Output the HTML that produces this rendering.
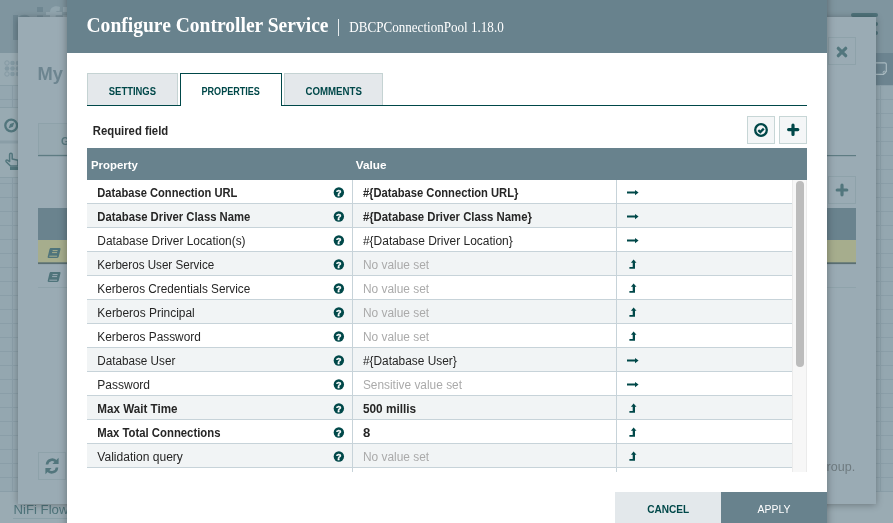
<!DOCTYPE html>
<html><head><meta charset="utf-8">
<style>
*{box-sizing:border-box;margin:0;padding:0}
html,body{width:893px;height:523px;overflow:hidden;position:relative;background:#94a7b0;font-family:"Liberation Sans",sans-serif}
.abs{position:absolute}
#nhead{left:0;top:0;width:893px;height:53px;background:#7f959f}
#ltool{left:0;top:53px;width:18px;height:32px;background:#98aab2}
#rtool{left:876px;top:53px;width:17px;height:32px;background:#6c8490}
#crumb{left:0;top:492px;width:893px;height:31px;background:#9aabb3}
#grid{left:0;top:85px;width:893px;height:407px;background-color:#94a7b0;
 background-image:linear-gradient(#8a9ea8 1px,transparent 1px),linear-gradient(90deg,#8a9ea8 1px,transparent 1px);
 background-size:14px 14px;background-position:12px 14px}
#mid{left:18px;top:17px;width:858px;height:487px;background:#9aabb4;box-shadow:0 1px 7px rgba(0,0,0,.3)}
#dlg{left:67px;top:-10px;width:760px;height:560px;background:#fff;box-shadow:0 0 8px rgba(0,0,0,.35)}
#dhead{left:67px;top:0;width:760px;height:53px;background:#68828d}
.tab{top:73px;height:32px;background:#e4e8eb;border:1px solid #c5d3d3;border-bottom:none}
#tabline{left:87px;top:105px;width:720px;height:1px;background:#004849}
#t2{background:#fff;border:1px solid #004849;border-bottom:none;height:33px}
.btn{top:116px;width:28px;height:28px;background:#f4f6f7;border:1px solid #c7d6d6}
#thead{left:87px;top:148px;width:720px;height:32px;background:#68828d}
#sb{left:792px;top:180px;width:15px;height:292px;background:#f7f7f7;border-left:1px solid #ebebeb;border-right:1px solid #ebebeb}
#thumb{left:796px;top:181px;width:8px;height:186px;background:#bcbcbc;border-radius:4px}
#cancel{left:615px;top:492px;width:106px;height:40px;background:#e3e8eb}
#apply{left:721px;top:492px;width:106px;height:40px;background:#68828d}
svg{position:absolute;left:0;top:0;will-change:transform}
</style></head><body>
<div class="abs" id="nhead"></div>
<svg width="893" height="60" style="position:absolute;left:0;top:0">
<path d="M13 40V15h5v2.5c2-2 4-2.7 6.5-2.7c3 0 5.5 1.5 6.5 4V40z" fill="#6f8792"/>
<rect x="37" y="7" width="6" height="5" fill="#6f8792"/>
<rect x="37" y="15.3" width="6" height="25" fill="#6f8792"/>
<path d="M50 40V12.5c0-4 2.5-6.2 6.5-6.2c1.5 0 2.6 .2 3.6 .6l-.6 4.4c-.6-.2-1.3-.3-2-.3c-1.4 0-1.8 .7-1.8 2V40z" fill="#91a5ae"/>
<rect x="46" y="12" width="16" height="3" fill="#91a5ae"/>
<rect x="63" y="7" width="5" height="5" fill="#91a5ae"/>
<rect x="63" y="15.3" width="5" height="25" fill="#91a5ae"/>
</svg>
<div class="abs" style="left:851px;top:13px;width:27px;height:4px;border-radius:2px;background:#4f727a"></div>
<div class="abs" style="left:873px;top:22px;width:5px;height:4px;border-radius:2px;background:#4f727a"></div>
<div class="abs" style="left:873px;top:31px;width:5px;height:4px;border-radius:2px;background:#4f727a"></div>
<div class="abs" id="ltool"></div>
<div class="abs" id="rtool"></div>
<div class="abs" id="grid"></div>
<div class="abs" id="crumb"></div>
<svg width="893" height="523" style="position:absolute;left:0;top:0">
<g fill="#8399a3"><circle cx="7" cy="63" r="2.2" fill="none" stroke="#8399a3" stroke-width="0.9"/><circle cx="12.5" cy="63" r="2.3"/><circle cx="18" cy="63" r="2.3"/>
<circle cx="7" cy="68.5" r="2.3"/><circle cx="12.5" cy="68.5" r="2.3"/><circle cx="18" cy="68.5" r="2.3"/>
<circle cx="7" cy="74" r="2.2" fill="none" stroke="#8399a3" stroke-width="0.9"/><circle cx="12.5" cy="74" r="2.3"/><circle cx="18" cy="74" r="2.3"/></g>
<rect x="0" y="85" width="18" height="1" fill="#889da6"/>
<rect x="0" y="107" width="18" height="70" fill="#98aab2"/>
<rect x="0" y="107" width="18" height="1" fill="#889da6"/>
<circle cx="11.2" cy="125.5" r="5.9" fill="none" stroke="#52767d" stroke-width="2.3"/>
<path d="M8.6 128.3l1.5-4.2l4.2-1.5l-1.5 4.2z" fill="#52767d"/>
<rect x="0" y="140.5" width="18" height="3" fill="#8a9ea7"/>
<path d="M9.6 161.5v-7c0-1.8 2.6-1.8 2.6 0v4.5l5.8 1.2v5.8h-7.5l-4.3-4.3c-.8-.9 .3-2.2 1.3-1.5z" fill="none" stroke="#52767d" stroke-width="1.5" stroke-linejoin="round"/>
<rect x="10" y="167" width="8" height="3" fill="#52767d"/>
<rect x="0" y="177" width="18" height="1" fill="#889da6"/>
<path d="M870 62.8h14.8q1.5 0 1.5 1.5v7.3l-2.8 2.8h-13.5" fill="none" stroke="#a9bac1" stroke-width="1.2"/><circle cx="884.3" cy="72.4" r="1.2" fill="none" stroke="#a9bac1" stroke-width="1"/>
<text x="13.5" y="513.7" font-size="13.2" fill="#4f747b" font-family="Liberation Sans">NiFi Flow</text>
<rect x="13" y="518" width="60" height="1" fill="#8aa0a8"/>
</svg>
<div class="abs" id="mid"></div>
<svg width="893" height="523" style="position:absolute;left:0;top:0">
<text x="37.6" y="79.8" font-size="17.6" font-weight="bold" fill="#6d8590" font-family="Liberation Sans" textLength="25.4" lengthAdjust="spacingAndGlyphs">My</text>
<rect x="38.5" y="123.5" width="40" height="31" fill="#97a9b1" stroke="#8ea2aa" stroke-width="1"/>
<text x="61" y="145" font-size="10.5" font-weight="bold" fill="#5a7b82" font-family="Liberation Sans">G</text>
<rect x="38" y="155" width="818" height="1.2" fill="#5e7c83"/>
<rect x="828.5" y="37.5" width="27" height="27" fill="none" stroke="#8ea2aa" stroke-width="1"/>
<path d="M838.3 48.3l7.4 7.4M845.7 48.3l-7.4 7.4" stroke="#52767d" stroke-width="3.2" stroke-linecap="round"/>
<rect x="828.5" y="176.5" width="27" height="27" fill="none" stroke="#8ea2aa" stroke-width="1"/>
<path d="M842 185.2v9.6M837.2 190h9.6" stroke="#52767d" stroke-width="3.2" stroke-linecap="round"/>
<rect x="38" y="208" width="818" height="32" fill="#6a838e"/>
<rect x="38" y="240" width="818" height="23" fill="#a6ad8d"/>
<rect x="38" y="262.3" width="818" height="1.8" fill="#5a6f73"/>
<rect x="38" y="287" width="818" height="1" fill="#8fa3ab"/>
<path d="M51 248h8.6c.7 0 1.1 .5 .9 1.2l-1.8 7.6c-.2 .7-.8 1.2-1.5 1.2h-8.6c-.7 0-1.1-.5-.9-1.2l1.8-7.6c.2-.7 .8-1.2 1.5-1.2z" fill="#4f747b"/><path d="M52.6 250.6h5M52.1 252.6h5M49.3 256.2h7.8" stroke="#a6ad8d" stroke-width="1"/>
<path d="M51 272h8.6c.7 0 1.1 .5 .9 1.2l-1.8 7.6c-.2 .7-.8 1.2-1.5 1.2h-8.6c-.7 0-1.1-.5-.9-1.2l1.8-7.6c.2-.7 .8-1.2 1.5-1.2z" fill="#4f747b"/><path d="M52.6 274.6h5M52.1 276.6h5M49.3 280.2h7.8" stroke="#9aabb4" stroke-width="1"/>
<rect x="38.5" y="452.5" width="27" height="27" fill="none" stroke="#8ea2aa" stroke-width="1"/>
<path d="M47 464.5a5.2 5.2 0 0 1 9.3-2.8M57 467.5a5.2 5.2 0 0 1-9.3 2.8" fill="none" stroke="#52767d" stroke-width="2.6"/>
<path d="M58.6 457.8v6.2h-6.2z M45.4 474.2v-6.2h6.2z" fill="#52767d"/>
<text x="826.6" y="471" font-size="13" fill="#6f7b80" font-family="Liberation Sans" textLength="28.6" lengthAdjust="spacingAndGlyphs">roup.</text>
</svg>
<div class="abs" id="dlg"></div>
<div class="abs" id="dhead"></div>
<div class="abs" id="tabline"></div>
<div class="abs tab" style="left:87px;width:91px"></div>
<div class="abs tab" id="t2" style="left:180px;width:102px"></div>
<div class="abs tab" style="left:284px;width:99px"></div>
<div class="abs btn" style="left:747px"></div>
<div class="abs btn" style="left:779px"></div>
<div class="abs" id="thead"></div>
<div class="abs" id="sb"></div>
<div class="abs" id="thumb"></div>
<div class="abs" id="cancel"></div>
<div class="abs" id="apply"></div>
<svg width="893" height="523" viewBox="0 0 893 523">
<text x="86.50" y="31.50" font-size="20" font-weight="bold" fill="#fff" font-family="Liberation Serif" textLength="242.00" lengthAdjust="spacingAndGlyphs" >Configure Controller Service</text>
<rect x="338" y="19" width="1" height="17" fill="#e6ecee"/>
<text x="349.30" y="32.40" font-size="14.6" font-weight="normal" fill="#fff" font-family="Liberation Serif" textLength="154.40" lengthAdjust="spacingAndGlyphs" >DBCPConnectionPool 1.18.0</text>
<text x="108.80" y="94.90" font-size="10" font-weight="bold" fill="#004849" font-family="Liberation Sans" textLength="47.20" lengthAdjust="spacingAndGlyphs" >SETTINGS</text>
<text x="201.50" y="94.90" font-size="10" font-weight="bold" fill="#004849" font-family="Liberation Sans" textLength="58.40" lengthAdjust="spacingAndGlyphs" >PROPERTIES</text>
<text x="305.50" y="94.90" font-size="10" font-weight="bold" fill="#004849" font-family="Liberation Sans" textLength="56.40" lengthAdjust="spacingAndGlyphs" >COMMENTS</text>
<text x="92.80" y="135.20" font-size="12" font-weight="bold" fill="#262626" font-family="Liberation Sans" textLength="75.40" lengthAdjust="spacingAndGlyphs" >Required field</text>
<text x="91.00" y="168.70" font-size="11.6" font-weight="bold" fill="#fff" font-family="Liberation Sans" textLength="46.80" lengthAdjust="spacingAndGlyphs" >Property</text>
<text x="355.80" y="168.80" font-size="11.6" font-weight="bold" fill="#fff" font-family="Liberation Sans" textLength="30.70" lengthAdjust="spacingAndGlyphs" >Value</text>
<text x="647.20" y="512.70" font-size="11" font-weight="bold" fill="#004849" font-family="Liberation Sans" textLength="42.00" lengthAdjust="spacingAndGlyphs" >CANCEL</text>
<text x="757.50" y="512.70" font-size="11" font-weight="normal" fill="#fff" font-family="Liberation Sans" textLength="32.90" lengthAdjust="spacingAndGlyphs" >APPLY</text>
<!-- check icon -->
<circle cx="761" cy="130" r="5.8" fill="none" stroke="#004849" stroke-width="2.3"/>
<path d="M758.3 130.1l2 2l3.5-3.5" fill="none" stroke="#004849" stroke-width="2.3"/>
<!-- plus icon -->
<path d="M793 125.2v9.2M788.6 129.6h9.2" stroke="#004849" stroke-width="3.2" stroke-linecap="round"/>
<rect x="87" y="180" width="705" height="24" fill="#ffffff"/>
<rect x="87" y="203" width="705" height="1" fill="#c7d3d9"/>
<rect x="87" y="204" width="705" height="24" fill="#f1f4f5"/>
<rect x="87" y="227" width="705" height="1" fill="#c7d3d9"/>
<rect x="87" y="228" width="705" height="24" fill="#ffffff"/>
<rect x="87" y="251" width="705" height="1" fill="#c7d3d9"/>
<rect x="87" y="252" width="705" height="24" fill="#f1f4f5"/>
<rect x="87" y="275" width="705" height="1" fill="#c7d3d9"/>
<rect x="87" y="276" width="705" height="24" fill="#ffffff"/>
<rect x="87" y="299" width="705" height="1" fill="#c7d3d9"/>
<rect x="87" y="300" width="705" height="24" fill="#f1f4f5"/>
<rect x="87" y="323" width="705" height="1" fill="#c7d3d9"/>
<rect x="87" y="324" width="705" height="24" fill="#ffffff"/>
<rect x="87" y="347" width="705" height="1" fill="#c7d3d9"/>
<rect x="87" y="348" width="705" height="24" fill="#f1f4f5"/>
<rect x="87" y="371" width="705" height="1" fill="#c7d3d9"/>
<rect x="87" y="372" width="705" height="24" fill="#ffffff"/>
<rect x="87" y="395" width="705" height="1" fill="#c7d3d9"/>
<rect x="87" y="396" width="705" height="24" fill="#f1f4f5"/>
<rect x="87" y="419" width="705" height="1" fill="#c7d3d9"/>
<rect x="87" y="420" width="705" height="24" fill="#ffffff"/>
<rect x="87" y="443" width="705" height="1" fill="#c7d3d9"/>
<rect x="87" y="444" width="705" height="24" fill="#f1f4f5"/>
<rect x="87" y="467" width="705" height="1" fill="#c7d3d9"/>
<rect x="87" y="468" width="705" height="24" fill="#ffffff"/>
<rect x="87" y="491" width="705" height="1" fill="#c7d3d9"/>
<rect x="352" y="180" width="1" height="292" fill="#c7d3d9"/>
<rect x="616" y="180" width="1" height="292" fill="#c7d3d9"/>
<rect x="87" y="472" width="720" height="20" fill="#fff"/>
<text x="97.30" y="197.20" font-size="12" font-weight="bold" fill="#262626" font-family="Liberation Sans" textLength="140.00" lengthAdjust="spacingAndGlyphs" >Database Connection URL</text>
<text x="362.90" y="197.20" font-size="12" font-weight="bold" fill="#262626" font-family="Liberation Sans" textLength="155.50" lengthAdjust="spacingAndGlyphs" >#{Database Connection URL}</text>
<circle cx="338.85" cy="192.55" r="5.2" fill="#004849"/>
<text x="338.85" y="195.75" font-size="9" font-weight="bold" fill="#fff" stroke="#fff" stroke-width="0.35" font-family="Liberation Sans" text-anchor="middle">?</text>
<path d="M627 191.55h8v-1.6l3.6 2.6l-3.6 2.6v-1.6h-8z" fill="#004849"/>
<text x="97.30" y="221.20" font-size="12" font-weight="bold" fill="#262626" font-family="Liberation Sans" textLength="153.00" lengthAdjust="spacingAndGlyphs" >Database Driver Class Name</text>
<text x="362.90" y="221.20" font-size="12" font-weight="bold" fill="#262626" font-family="Liberation Sans" textLength="169.00" lengthAdjust="spacingAndGlyphs" >#{Database Driver Class Name}</text>
<circle cx="338.85" cy="216.55" r="5.2" fill="#004849"/>
<text x="338.85" y="219.75" font-size="9" font-weight="bold" fill="#fff" stroke="#fff" stroke-width="0.35" font-family="Liberation Sans" text-anchor="middle">?</text>
<path d="M627 215.55h8v-1.6l3.6 2.6l-3.6 2.6v-1.6h-8z" fill="#004849"/>
<text x="97.30" y="245.20" font-size="12" font-weight="normal" fill="#262626" font-family="Liberation Sans" textLength="148.30" lengthAdjust="spacingAndGlyphs" >Database Driver Location(s)</text>
<text x="362.90" y="245.20" font-size="12" font-weight="normal" fill="#262626" font-family="Liberation Sans" textLength="149.90" lengthAdjust="spacingAndGlyphs" >#{Database Driver Location}</text>
<circle cx="338.85" cy="240.55" r="5.2" fill="#004849"/>
<text x="338.85" y="243.75" font-size="9" font-weight="bold" fill="#fff" stroke="#fff" stroke-width="0.35" font-family="Liberation Sans" text-anchor="middle">?</text>
<path d="M627 239.55h8v-1.6l3.6 2.6l-3.6 2.6v-1.6h-8z" fill="#004849"/>
<text x="97.30" y="269.20" font-size="12" font-weight="normal" fill="#262626" font-family="Liberation Sans" textLength="116.90" lengthAdjust="spacingAndGlyphs" >Kerberos User Service</text>
<text x="362.90" y="269.20" font-size="12" font-weight="normal" fill="#aaaaaa" font-family="Liberation Sans" textLength="66.20" lengthAdjust="spacingAndGlyphs" >No value set</text>
<circle cx="338.85" cy="264.55" r="5.2" fill="#004849"/>
<text x="338.85" y="267.75" font-size="9" font-weight="bold" fill="#fff" stroke="#fff" stroke-width="0.35" font-family="Liberation Sans" text-anchor="middle">?</text>
<path d="M633.6 259.60l2.9 3.2h-1.5v6h-5.6v-1.9h3.3v-4.1h-1.8z" fill="#004849"/>
<text x="97.30" y="293.20" font-size="12" font-weight="normal" fill="#262626" font-family="Liberation Sans" textLength="153.00" lengthAdjust="spacingAndGlyphs" >Kerberos Credentials Service</text>
<text x="362.90" y="293.20" font-size="12" font-weight="normal" fill="#aaaaaa" font-family="Liberation Sans" textLength="66.20" lengthAdjust="spacingAndGlyphs" >No value set</text>
<circle cx="338.85" cy="288.55" r="5.2" fill="#004849"/>
<text x="338.85" y="291.75" font-size="9" font-weight="bold" fill="#fff" stroke="#fff" stroke-width="0.35" font-family="Liberation Sans" text-anchor="middle">?</text>
<path d="M633.6 283.60l2.9 3.2h-1.5v6h-5.6v-1.9h3.3v-4.1h-1.8z" fill="#004849"/>
<text x="97.30" y="317.20" font-size="12" font-weight="normal" fill="#262626" font-family="Liberation Sans" textLength="97.40" lengthAdjust="spacingAndGlyphs" >Kerberos Principal</text>
<text x="362.90" y="317.20" font-size="12" font-weight="normal" fill="#aaaaaa" font-family="Liberation Sans" textLength="66.20" lengthAdjust="spacingAndGlyphs" >No value set</text>
<circle cx="338.85" cy="312.55" r="5.2" fill="#004849"/>
<text x="338.85" y="315.75" font-size="9" font-weight="bold" fill="#fff" stroke="#fff" stroke-width="0.35" font-family="Liberation Sans" text-anchor="middle">?</text>
<path d="M633.6 307.60l2.9 3.2h-1.5v6h-5.6v-1.9h3.3v-4.1h-1.8z" fill="#004849"/>
<text x="97.30" y="341.20" font-size="12" font-weight="normal" fill="#262626" font-family="Liberation Sans" textLength="103.50" lengthAdjust="spacingAndGlyphs" >Kerberos Password</text>
<text x="362.90" y="341.20" font-size="12" font-weight="normal" fill="#aaaaaa" font-family="Liberation Sans" textLength="66.20" lengthAdjust="spacingAndGlyphs" >No value set</text>
<circle cx="338.85" cy="336.55" r="5.2" fill="#004849"/>
<text x="338.85" y="339.75" font-size="9" font-weight="bold" fill="#fff" stroke="#fff" stroke-width="0.35" font-family="Liberation Sans" text-anchor="middle">?</text>
<path d="M633.6 331.60l2.9 3.2h-1.5v6h-5.6v-1.9h3.3v-4.1h-1.8z" fill="#004849"/>
<text x="97.30" y="365.20" font-size="12" font-weight="normal" fill="#262626" font-family="Liberation Sans" textLength="78.00" lengthAdjust="spacingAndGlyphs" >Database User</text>
<text x="362.90" y="365.20" font-size="12" font-weight="normal" fill="#262626" font-family="Liberation Sans" textLength="93.90" lengthAdjust="spacingAndGlyphs" >#{Database User}</text>
<circle cx="338.85" cy="360.55" r="5.2" fill="#004849"/>
<text x="338.85" y="363.75" font-size="9" font-weight="bold" fill="#fff" stroke="#fff" stroke-width="0.35" font-family="Liberation Sans" text-anchor="middle">?</text>
<path d="M627 359.55h8v-1.6l3.6 2.6l-3.6 2.6v-1.6h-8z" fill="#004849"/>
<text x="97.30" y="389.20" font-size="12" font-weight="normal" fill="#262626" font-family="Liberation Sans" textLength="52.70" lengthAdjust="spacingAndGlyphs" >Password</text>
<text x="362.90" y="389.20" font-size="12" font-weight="normal" fill="#aaaaaa" font-family="Liberation Sans" textLength="99.10" lengthAdjust="spacingAndGlyphs" >Sensitive value set</text>
<circle cx="338.85" cy="384.55" r="5.2" fill="#004849"/>
<text x="338.85" y="387.75" font-size="9" font-weight="bold" fill="#fff" stroke="#fff" stroke-width="0.35" font-family="Liberation Sans" text-anchor="middle">?</text>
<path d="M627 383.55h8v-1.6l3.6 2.6l-3.6 2.6v-1.6h-8z" fill="#004849"/>
<text x="97.30" y="413.20" font-size="12" font-weight="bold" fill="#262626" font-family="Liberation Sans" textLength="80.20" lengthAdjust="spacingAndGlyphs" >Max Wait Time</text>
<text x="362.90" y="413.20" font-size="12" font-weight="bold" fill="#262626" font-family="Liberation Sans" textLength="53.20" lengthAdjust="spacingAndGlyphs" >500 millis</text>
<circle cx="338.85" cy="408.55" r="5.2" fill="#004849"/>
<text x="338.85" y="411.75" font-size="9" font-weight="bold" fill="#fff" stroke="#fff" stroke-width="0.35" font-family="Liberation Sans" text-anchor="middle">?</text>
<path d="M633.6 403.60l2.9 3.2h-1.5v6h-5.6v-1.9h3.3v-4.1h-1.8z" fill="#004849"/>
<text x="97.30" y="437.20" font-size="12" font-weight="bold" fill="#262626" font-family="Liberation Sans" textLength="123.20" lengthAdjust="spacingAndGlyphs" >Max Total Connections</text>
<text x="362.90" y="437.20" font-size="12" font-weight="bold" fill="#262626" font-family="Liberation Sans" textLength="7.30" lengthAdjust="spacingAndGlyphs" >8</text>
<circle cx="338.85" cy="432.55" r="5.2" fill="#004849"/>
<text x="338.85" y="435.75" font-size="9" font-weight="bold" fill="#fff" stroke="#fff" stroke-width="0.35" font-family="Liberation Sans" text-anchor="middle">?</text>
<path d="M633.6 427.60l2.9 3.2h-1.5v6h-5.6v-1.9h3.3v-4.1h-1.8z" fill="#004849"/>
<text x="97.30" y="461.20" font-size="12" font-weight="normal" fill="#262626" font-family="Liberation Sans" textLength="85.60" lengthAdjust="spacingAndGlyphs" >Validation query</text>
<text x="362.90" y="461.20" font-size="12" font-weight="normal" fill="#aaaaaa" font-family="Liberation Sans" textLength="66.20" lengthAdjust="spacingAndGlyphs" >No value set</text>
<circle cx="338.85" cy="456.55" r="5.2" fill="#004849"/>
<text x="338.85" y="459.75" font-size="9" font-weight="bold" fill="#fff" stroke="#fff" stroke-width="0.35" font-family="Liberation Sans" text-anchor="middle">?</text>
<path d="M633.6 451.60l2.9 3.2h-1.5v6h-5.6v-1.9h3.3v-4.1h-1.8z" fill="#004849"/>
</svg>
</body></html>
